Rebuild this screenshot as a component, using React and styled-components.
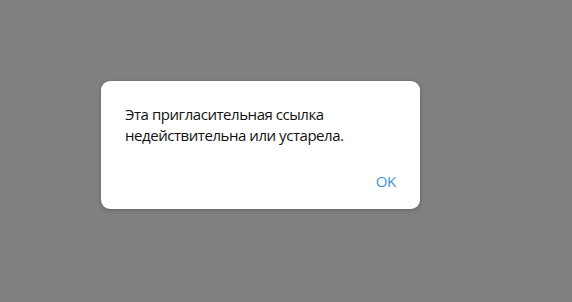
import React from 'react';
import styled, { createGlobalStyle } from 'styled-components';

const GlobalStyle = createGlobalStyle`
  html, body {
    margin: 0;
    padding: 0;
    height: 100%;
  }
  #root {
    height: 100%;
  }
  body {
    font-family: "Open Sans", "Noto Sans", sans-serif;
  }
`;

const App = () => {
    return (
        <>
            <GlobalStyle />
            <Overlay>
                <Popup>
                    <Description>
                        Эта пригласительная ссылка недействительна или устарела.
                    </Description>
                    <Buttons>
                        <Button>OK</Button>
                    </Buttons>
                </Popup>
            </Overlay>
        </>
    );
};

export default App;

const Overlay = styled.div`
  width: 100%;
  height: 100%;
  box-sizing: border-box;
  background: #808080;
  padding: 81px 0 0 101px;
`;
const Popup = styled.div`
  width: 319px;
  height: 128px;
  box-sizing: border-box;
  background: #fff;
  border-radius: 9px;
  box-shadow: 0 1px 4px rgba(0, 0, 0, 0.25);
  padding: 23px 24px 0 24px;
  display: flex;
  flex-direction: column;
`;
const Description = styled.div`
  font-size: 15px;
  line-height: 21px;
  letter-spacing: -0.45px;
  color: #111;
`;
const Buttons = styled.div`
  display: flex;
  justify-content: flex-end;
  margin-top: 21px;
  margin-right: -10px;
`;
const Button = styled.button`
  border: none;
  background: transparent;
  font-family: "Open Sans", sans-serif;
  font-size: 15px;
  line-height: 20px;
  letter-spacing: -0.3px;
  color: #3d95d8;
  padding: 4px 10px;
  cursor: pointer;
`;
